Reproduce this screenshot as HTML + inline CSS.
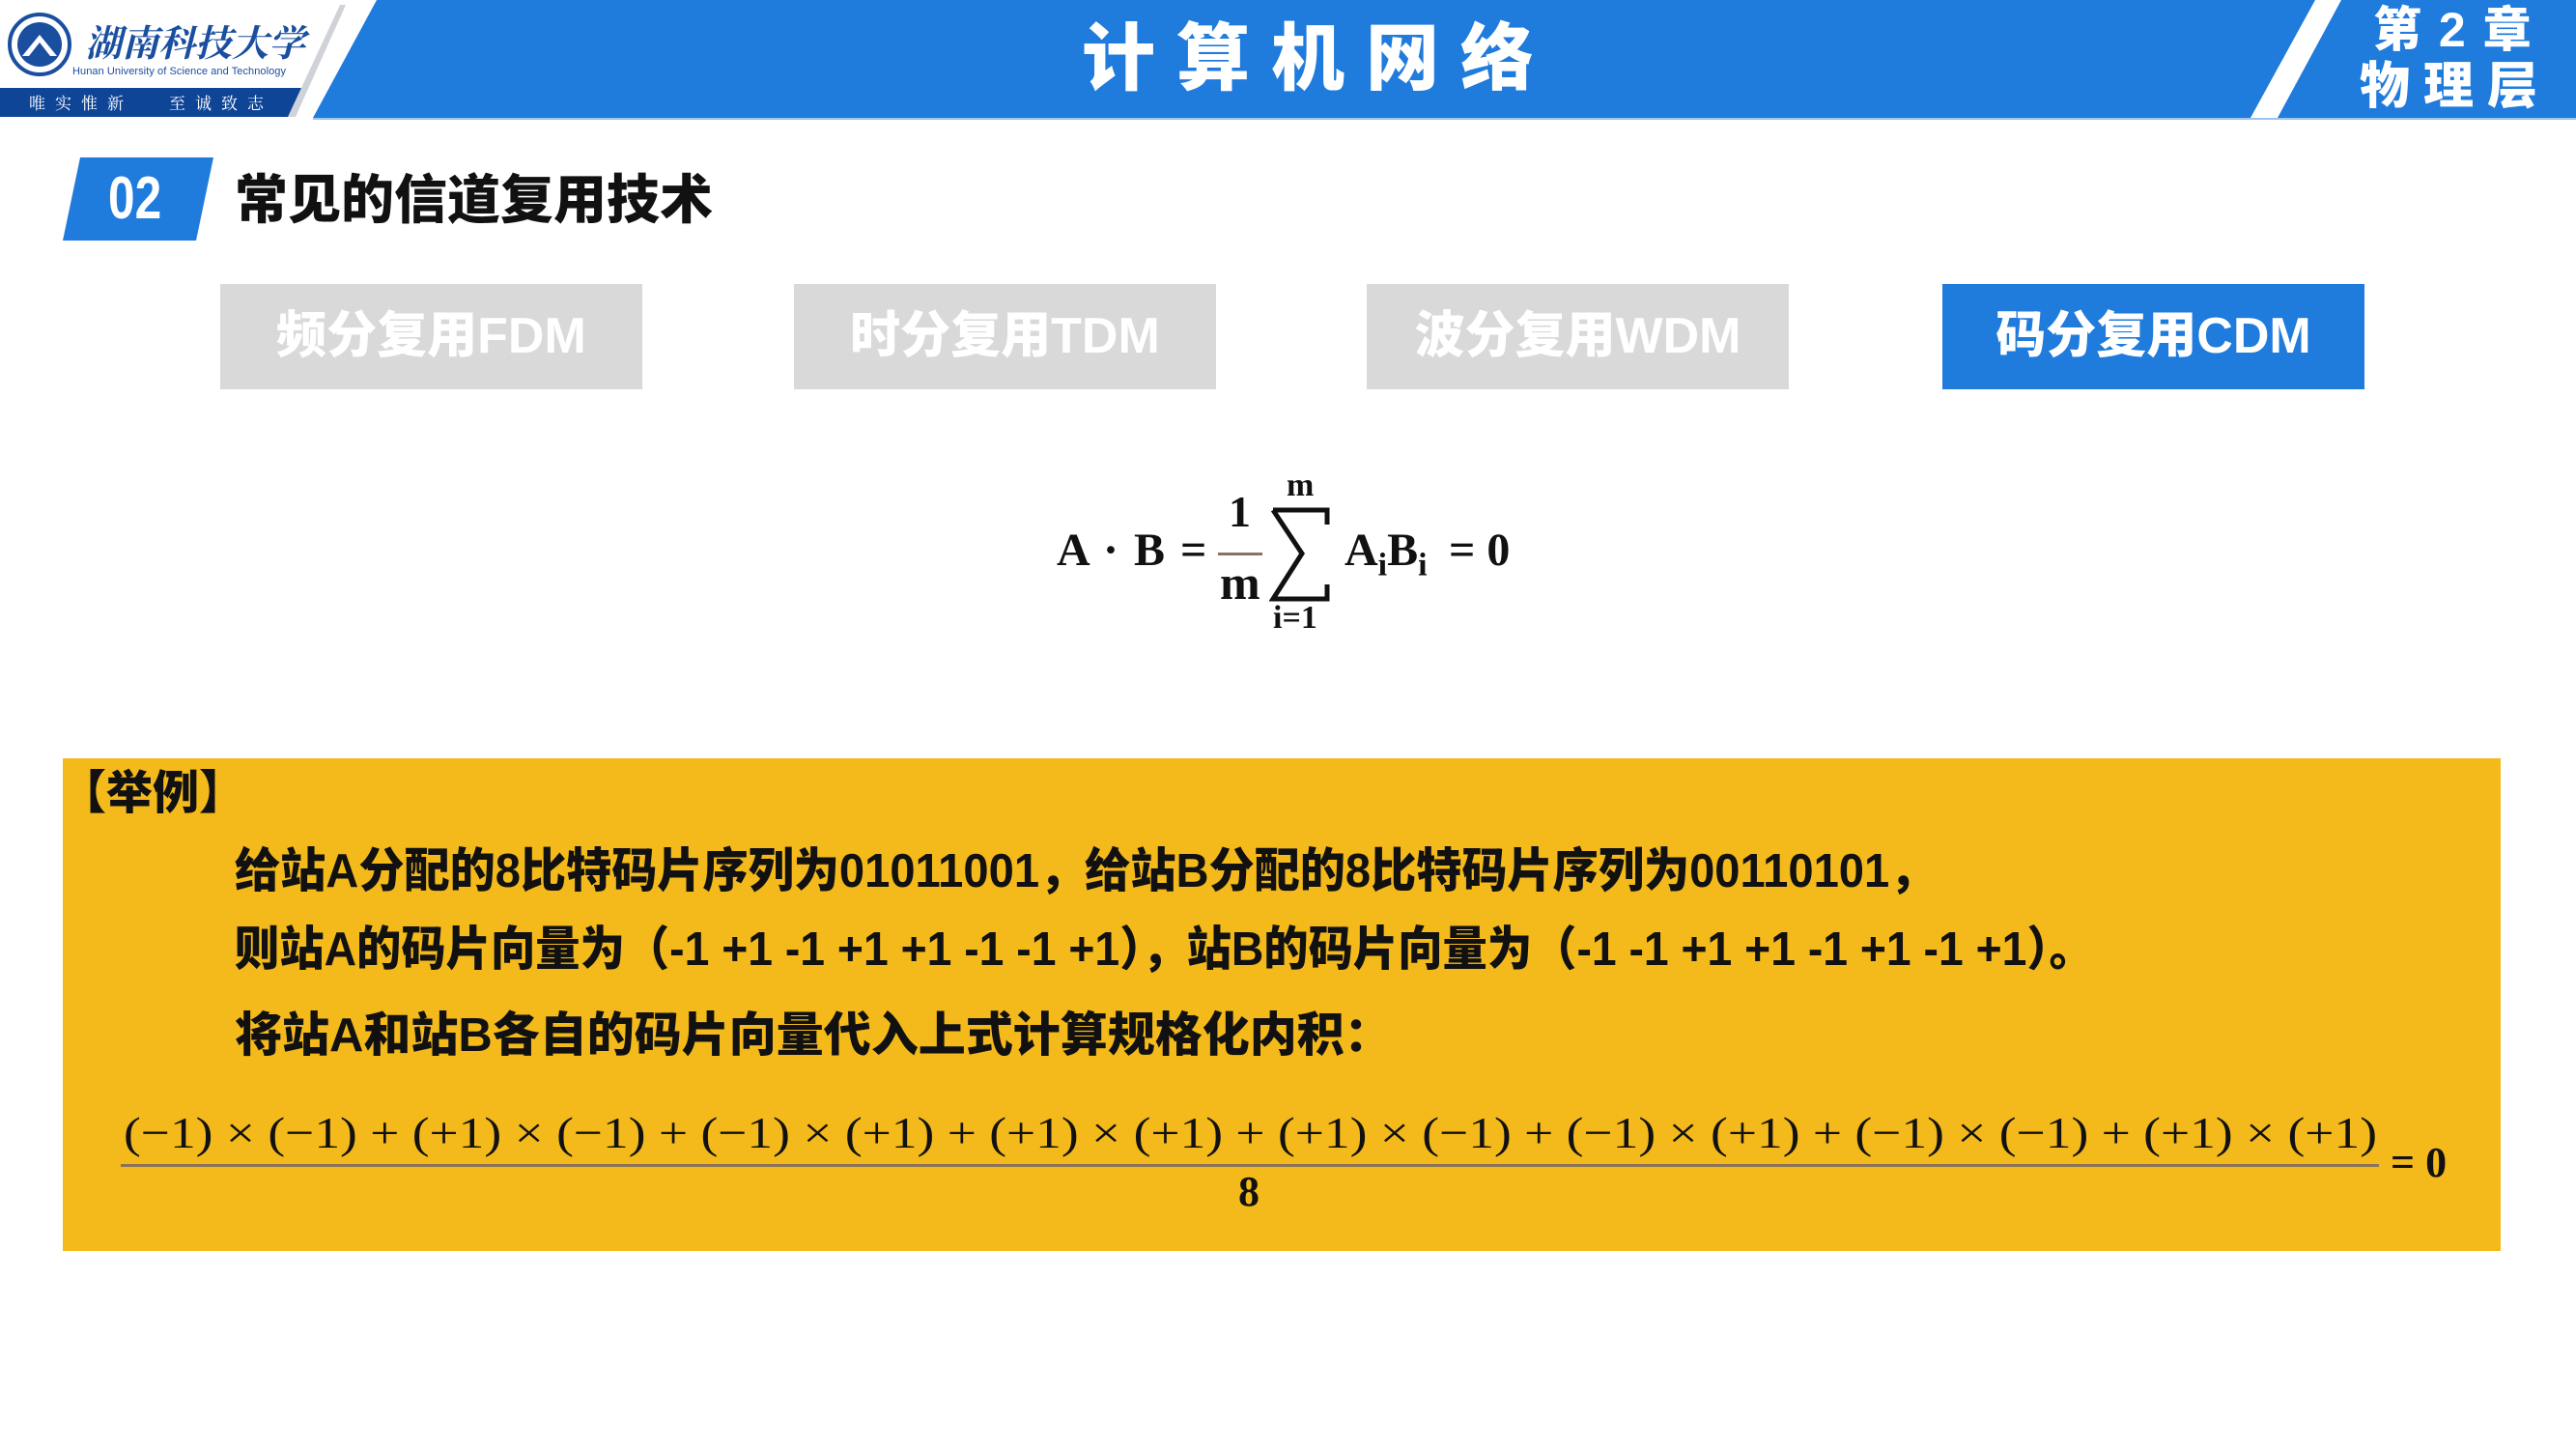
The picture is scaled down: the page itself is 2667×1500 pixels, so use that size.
<!DOCTYPE html>
<html><head><meta charset="utf-8"><style>
*{margin:0;padding:0;box-sizing:border-box}
body{width:2667px;height:1500px;position:relative;background:#fff;overflow:hidden;font-family:"Liberation Sans","Noto Sans CJK SC",sans-serif}
.a{position:absolute;white-space:nowrap}
.tab{position:absolute;top:294px;height:109px;width:437px;background:#d9d9d9;color:#fff;font-weight:900;font-size:52px;text-align:center;line-height:109px}
.ser{font-family:"Liberation Serif","DejaVu Serif",serif;font-weight:bold;color:#111}
.ln{font-weight:900;font-size:49px;color:#111;left:243px;transform-origin:left center}
</style></head><body>
<svg class="a" style="left:0;top:0" width="2667" height="125">
<polygon points="390,0 2397,0 2330,122 324,122" fill="#1f7bdc"/>
<polygon points="2424,0 2667,0 2667,122 2358,122" fill="#1f7bdc"/>
<line x1="324" y1="123" x2="2667" y2="123" stroke="#9cc4ee" stroke-width="2"/>
<polygon points="0,91 312,91 300,121 0,121" fill="#0e4597"/>
<polygon points="352,5 358,5 306,121 298,121" fill="#cfd3d8"/>
<circle cx="41" cy="46" r="31" fill="none" stroke="#1a4fa0" stroke-width="4"/>
<circle cx="41" cy="46" r="23" fill="#1a4fa0"/>
<polygon points="23,58 41,36 59,58 52,58 41,44 30,58" fill="#fff"/>
<text x="88" y="58" font-family="Noto Serif CJK SC,serif" font-size="38" font-style="italic" font-weight="bold" fill="#1a4fa0">湖南科技大学</text>
<text x="75" y="77" font-family="Liberation Sans,sans-serif" font-size="11" fill="#1a4fa0" textLength="221">Hunan University of Science and Technology</text>
<text x="30" y="113" font-family="Noto Serif CJK SC,serif" font-size="17" fill="#fff" letter-spacing="10">唯实惟新</text>
<text x="175" y="113" font-family="Noto Serif CJK SC,serif" font-size="17" fill="#fff" letter-spacing="10">至诚致志</text>
</svg>
<div class="a" style="left:1120px;top:14px;font-size:76px;font-weight:900;color:#fff;letter-spacing:22px;line-height:96px">计算机网络</div>
<div class="a" style="left:2457px;top:2px;font-size:50px;font-weight:900;color:#fff;line-height:58px;letter-spacing:2px">第 2 章</div>
<div class="a" style="left:2443px;top:60px;font-size:52px;font-weight:900;color:#fff;line-height:60px;letter-spacing:14px">物理层</div>

<svg class="a" style="left:60px;top:160px" width="170" height="92"><polygon points="23,3 161,3 143,89 5,89" fill="#1f7bdc"/></svg>
<div class="a" style="left:112px;top:168px;font-size:62px;font-weight:900;color:#fff;line-height:76px;transform:scaleX(0.8);transform-origin:left">02</div>
<div class="a" style="left:243px;top:172px;font-size:55px;font-weight:900;color:#111;line-height:70px">常见的信道复用技术</div>

<div class="tab" style="left:228px">频分复用FDM</div>
<div class="tab" style="left:822px">时分复用TDM</div>
<div class="tab" style="left:1415px">波分复用WDM</div>
<div class="tab" style="left:2011px;background:#1f7bdc">码分复用CDM</div>

<div class="a ser" style="left:1094px;top:540px;font-size:48px;line-height:60px;letter-spacing:2px">A · B =</div>
<div class="a ser" style="left:1272px;top:505px;font-size:46px;line-height:50px">1</div>
<div class="a" style="left:1261px;top:572px;width:46px;height:3px;background:#8b6f66"></div>
<div class="a ser" style="left:1263px;top:578px;font-size:50px;line-height:50px">m</div>
<div class="a ser" style="left:1332px;top:485px;font-size:34px;line-height:36px">m</div>
<svg class="a" style="left:1314px;top:525px" width="66" height="100"><path d="M4 3 H60 V18 M4 3 L34 48 L4 95 H60 V80" fill="none" stroke="#111" stroke-width="5"/></svg>
<div class="a ser" style="left:1318px;top:622px;font-size:34px;line-height:36px">i=1</div>
<div class="a ser" style="left:1392px;top:540px;font-size:48px;line-height:60px">A<sub style="font-size:34px">i</sub>B<sub style="font-size:34px">i</sub></div>
<div class="a ser" style="left:1500px;top:540px;font-size:48px;line-height:60px">= 0</div>

<div class="a" style="left:65px;top:785px;width:2524px;height:510px;background:#f4b91a"></div>
<div class="a" style="left:62px;top:792px;font-size:48px;font-weight:900;color:#111;line-height:60px">【举例】</div>
<div class="a ln" style="top:872px;line-height:60px;transform:scaleX(0.962)">给站A分配的8比特码片序列为01011001，给站B分配的8比特码片序列为00110101，</div>
<div class="a ln" style="top:953px;line-height:60px;transform:scaleX(0.945)">则站A的码片向量为（-1 +1 -1 +1 +1 -1 -1 +1），站B的码片向量为（-1 -1 +1 +1 -1 +1 -1 +1）。</div>
<div class="a ln" style="top:1042px;line-height:60px">将站A和站B各自的码片向量代入上式计算规格化内积：</div>
<svg class="a" style="left:0;top:1130px" width="2667" height="140">
<text x="128" y="58" textLength="2333" lengthAdjust="spacingAndGlyphs" font-family="Liberation Serif,serif" font-size="46" fill="#111">(−1) × (−1) + (+1) × (−1) + (−1) × (+1) + (+1) × (+1) + (+1) × (−1) + (−1) × (+1) + (−1) × (−1) + (+1) × (+1)</text>
<rect x="125" y="75" width="2338" height="3" fill="#8b7355"/>
<text x="1293" y="118" font-family="Liberation Serif,serif" font-size="44" font-weight="bold" fill="#111" text-anchor="middle">8</text>
<text x="2475" y="88" font-family="Liberation Serif,serif" font-size="44" font-weight="bold" fill="#111">= 0</text>
</svg>
</body></html>
